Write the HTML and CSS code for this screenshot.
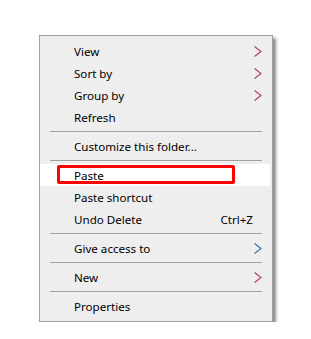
FILE: index.html
```html
<!DOCTYPE html>
<html>
<head>
<meta charset="utf-8">
<link rel="stylesheet" href="styles.css">
</head>
<body>
<div class="menu">
  <div class="item"><span class="label">View</span><svg class="chev" width="8" height="11" viewBox="0 0 8 11"><polyline points="0.5,0.5 7,5.5 0.5,10.5" class="c-red"/></svg></div>
  <div class="item"><span class="label">Sort by</span><svg class="chev" width="8" height="11" viewBox="0 0 8 11"><polyline points="0.5,0.5 7,5.5 0.5,10.5" class="c-red"/></svg></div>
  <div class="item"><span class="label">Group by</span><svg class="chev" width="8" height="11" viewBox="0 0 8 11"><polyline points="0.5,0.5 7,5.5 0.5,10.5" class="c-red"/></svg></div>
  <div class="item"><span class="label">Refresh</span></div>
  <div class="sep"></div>
  <div class="item"><span class="label">Customize this folder...</span></div>
  <div class="sep"></div>
  <div class="item hover"><span class="label">Paste</span><span class="mark"></span></div>
  <div class="item"><span class="label">Paste shortcut</span></div>
  <div class="item"><span class="label">Undo Delete</span><span class="key">Ctrl+Z</span></div>
  <div class="sep"></div>
  <div class="item"><span class="label">Give access to</span><svg class="chev" width="8" height="11" viewBox="0 0 8 11"><polyline points="0.5,0.5 7,5.5 0.5,10.5" class="c-blue"/></svg></div>
  <div class="sep"></div>
  <div class="item"><span class="label">New</span><svg class="chev" width="8" height="11" viewBox="0 0 8 11"><polyline points="0.5,0.5 7,5.5 0.5,10.5" class="c-red"/></svg></div>
  <div class="sep"></div>
  <div class="item"><span class="label">Properties</span></div>
</div>
</body>
</html>
```

FILE: styles.css
```css
html, body {
  margin: 0;
  padding: 0;
  background: #ffffff;
}

body {
  font-family: "Noto Sans", "Open Sans", sans-serif;
  font-size: 11.6px;
  color: #000000;
}

.menu {
  box-sizing: border-box;
  width: 234px;
  margin: 35px 0 0 39px;
  padding: 4px 2px 4px 0;
  background: #eeeeee;
  border: 1px solid #a0a0a0;
  box-shadow: 3px 3px 3px rgba(0, 0, 0, 0.45);
}

.item {
  position: relative;
  display: flex;
  align-items: center;
  height: 22px;
  padding: 0 8px 0 34px;
}

.item.hover {
  background: #ffffff;
}

.label {
  flex: 1;
  white-space: nowrap;
}

.key {
  margin-right: 9px;
}

.chev {
  display: block;
}

.chev polyline {
  fill: none;
  stroke-width: 1.1;
}

.c-red {
  stroke: #b03a52;
}

.c-blue {
  stroke: #2f6db5;
}

.sep {
  height: 1px;
  margin: 3px 8px 3px 10px;
  background: #a0a0a0;
}

.mark {
  position: absolute;
  left: 17px;
  top: 1px;
  width: 178px;
  height: 19px;
  box-sizing: border-box;
  border: 3px solid #ff0000;
  border-radius: 2px;
}
```
